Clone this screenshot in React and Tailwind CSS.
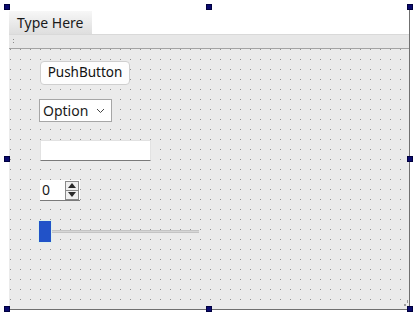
import React from 'react';

const HANDLES = [
  'left-[4px] top-[4px]',
  'left-[206px] top-[4px]',
  'left-[407px] top-[4px]',
  'left-[4px] top-[156px]',
  'left-[407px] top-[156px]',
  'left-[4px] top-[306px]',
  'left-[206px] top-[306px]',
  'left-[407px] top-[306px]',
];

function DotGrid() {
  return (
    <svg className="absolute inset-0 w-full h-full" aria-hidden="true">
      <defs>
        <pattern id="dots" width="10" height="10" x="1" y="0" patternUnits="userSpaceOnUse">
          <rect x="0" y="0" width="1" height="1" fill="#939393" />
        </pattern>
      </defs>
      <rect width="100%" height="100%" fill="url(#dots)" />
    </svg>
  );
}

export default function App() {
  return (
    <div
      className="relative w-[418px] h-[318px] bg-white overflow-hidden text-[#1a1a1a]"
      style={{ fontFamily: '"Noto Sans", "Open Sans", sans-serif' }}
    >
      <div className="pt-[10px] pl-[9px]">
        {/* form */}
        <div className="w-[401px] h-[300px] flex flex-col border-r border-b border-[#6f6f6f]">
          {/* menu bar */}
          <div className="h-[24px] flex items-end bg-white">
            <div className="w-[83px] h-[23px] flex items-center pl-[8px] text-[14px] leading-none bg-gradient-to-b from-[#f7f7f7] to-[#dedede]">
              Type Here
            </div>
          </div>
          <div className="h-px bg-[#d9d9d9]" />
          {/* tool bar */}
          <div className="relative h-[13px] bg-[#e7e7e7]">
            <div className="absolute left-[4px] top-[4px] w-px h-px bg-[#8a8a8a]" />
            <div className="absolute left-[4px] top-[7px] w-px h-px bg-[#8a8a8a]" />
          </div>
          <div className="h-px bg-[#a3a3a3]" />
          {/* central widget */}
          <div className="relative flex-1 bg-[#ebebeb]">
            <DotGrid />
            <div className="relative flex flex-col items-start pl-[31px] pt-[12px]">
              <button className="w-[90px] h-[24px] rounded-[4px] border border-[#cfcfcf] bg-[#fdfdfd] text-[13.5px] leading-none text-[#111]">
                PushButton
              </button>

              <div className="mt-[14px] -ml-px w-[73px] h-[23px] flex items-center justify-between bg-white border border-[#a6a6a6] pl-[3px] pr-[6px] text-[14px] leading-none">
                <span>Option</span>
                <svg width="9" height="6" viewBox="0 0 9 6">
                  <polyline points="1,1 4.5,4.5 8,1" fill="none" stroke="#444" strokeWidth="1" />
                </svg>
              </div>

              <div className="mt-[18px] w-[111px] h-[21px] bg-white border border-[#e2e2e2] border-b-[#7a7a7a]" />

              <div className="mt-[19px] w-[40px] h-[21px] flex items-center bg-white border-b border-[#7a7a7a]">
                <span className="pl-[2px] text-[14px] leading-none flex-1">0</span>
                <div className="w-[14px] h-[19px] mr-[1px] flex flex-col border border-[#8a8a8a] bg-[#f0f0f0]">
                  <div className="flex-1 flex items-center justify-center border-b border-[#8a8a8a]">
                    <svg width="8" height="5" viewBox="0 0 8 5">
                      <polygon points="0,5 4,0 8,5" fill="#2a2a2a" />
                    </svg>
                  </div>
                  <div className="flex-1 flex items-center justify-center">
                    <svg width="8" height="5" viewBox="0 0 8 5">
                      <polygon points="0,0 8,0 4,5" fill="#2a2a2a" />
                    </svg>
                  </div>
                </div>
              </div>

              <div className="mt-[19px] -ml-[2px] flex items-center">
                <div className="px-px py-px bg-[#dcefeb]">
                  <div className="w-[12px] h-[21px] bg-[#2152c8]" />
                </div>
                <div className="w-[147px] h-[3px] bg-[#d6d6d6] border-y border-[#c4c4c4]" />
              </div>
            </div>
            {/* size grip */}
            <div className="absolute right-[3px] bottom-[3px] w-[2px] h-[2px] bg-[#9a9a9a]" />
            <div className="absolute right-[1px] bottom-[6px] w-px h-[3px] bg-[#9a9a9a]" />
          </div>
        </div>
      </div>

      {HANDLES.map((h) => (
        <div key={h} className={`absolute w-[6px] h-[6px] bg-[#0a0a6e] border border-[#000040] ${h}`} />
      ))}
    </div>
  );
}
